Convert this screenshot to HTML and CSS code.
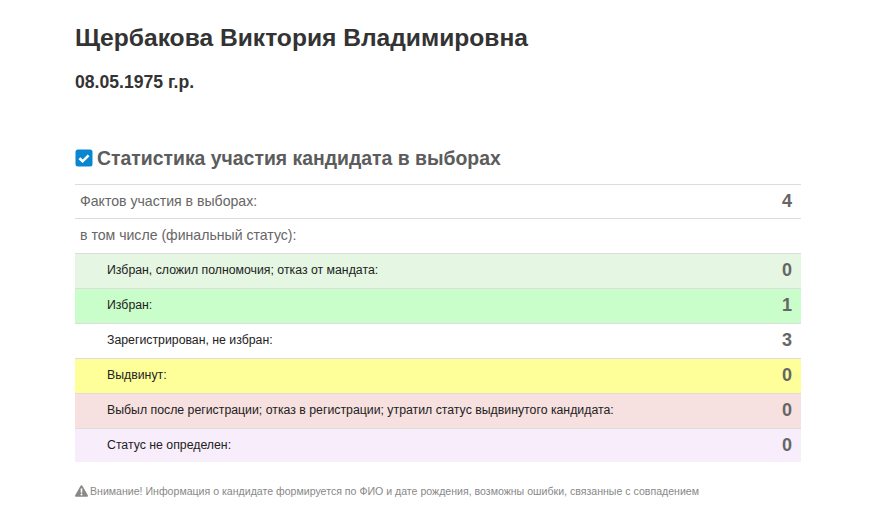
FILE: index.html
```html
<!DOCTYPE html>
<html lang="ru">
<head>
<meta charset="utf-8">
<title>Статистика</title>
<link rel="stylesheet" href="styles.css">
</head>
<body>
<main class="page">
  <h1 class="name">Щербакова Виктория Владимировна</h1>
  <h2 class="dob">08.05.1975 г.р.</h2>
  <h3 class="section">
    <svg class="check" width="18" height="18" viewBox="0 0 18 18"><rect x="0.5" y="0.5" width="17" height="17" rx="2.5" fill="#0a85d0"/><path d="M4.4 9.2l3.2 3.1 6-6" fill="none" stroke="#fff" stroke-width="2.6"/></svg>
    Статистика участия кандидата в выборах
  </h3>
  <div class="stats">
    <div class="row main first"><span>Фактов участия в выборах:</span><b class="num">4</b></div>
    <div class="row main"><span>в том числе (финальный статус):</span></div>
    <div class="row sub green"><span>Избран, сложил полномочия; отказ от мандата:</span><b class="num">0</b></div>
    <div class="row sub bright"><span>Избран:</span><b class="num">1</b></div>
    <div class="row sub"><span>Зарегистрирован, не избран:</span><b class="num">3</b></div>
    <div class="row sub yellow"><span>Выдвинут:</span><b class="num">0</b></div>
    <div class="row sub red"><span>Выбыл после регистрации; отказ в регистрации; утратил статус выдвинутого кандидата:</span><b class="num">0</b></div>
    <div class="row sub violet"><span>Статус не определен:</span><b class="num">0</b></div>
  </div>
  <p class="note">
    <svg class="warn" width="13" height="12" viewBox="0 0 13 12"><path fill-rule="evenodd" d="M6.5.3c.4 0 .7.2.9.5l5.4 9.5c.4.7-.1 1.5-.9 1.5H1.1c-.8 0-1.3-.8-.9-1.5L5.6.8c.2-.3.5-.5.9-.5zM5.6 3.6l.2 4.2h1.4l.2-4.2zM6.5 8.5a1 1 0 1 0 0 2 1 1 0 0 0 0-2z" fill="#888"/></svg>
    Внимание! Информация о кандидате формируется по ФИО и дате рождения, возможны ошибки, связанные с совпадением
  </p>
</main>
</body>
</html>
```
FILE: styles.css
```css
html, body {
  margin: 0;
  padding: 0;
  background: #fff;
}
body {
  font-family: "Liberation Sans", Arial, sans-serif;
  color: #333;
}
.page {
  width: 726px;
  margin-left: 75px;
  padding-top: 23px;
  padding-bottom: 28px;
}
.name {
  margin: 0;
  font-size: 24.6px;
  line-height: 30px;
  font-weight: 700;
  color: #333;
}
.dob {
  margin: 19px 0 0;
  font-size: 17.6px;
  line-height: 21px;
  font-weight: 700;
  color: #333;
}
.section {
  margin: 53px 0 0;
  display: flex;
  align-items: center;
  gap: 5px;
  font-size: 19.4px;
  line-height: 24px;
  font-weight: 700;
  color: #5c5c5c;
}
.check {
  flex: none;
  margin-left: -0.5px;
  margin-right: -0.5px;
}
.stats {
  margin-top: 14px;
  border-top: 1px solid #ddd;
}
.row {
  display: flex;
  justify-content: space-between;
  align-items: center;
  height: 32px;
  padding: 0 9px 2px 5px;
  border-bottom: 1px solid #ddd;
}
.first {
  height: 31px;
}
.main {
  font-size: 14.1px;
  color: #666;
}
.sub {
  padding-left: 32px;
  font-size: 12.3px;
  color: #222;
}
.sub:last-child {
  border-bottom: 0;
  height: 31px;
}
.num {
  font-size: 18px;
  line-height: 20px;
  color: #666;
}
.green { background: #e5f6e2; }
.bright { background: #c9fdc9; }
.yellow { background: #ffff99; }
.red { background: #f6e0e0; }
.violet { background: #f8edfa; }
.note {
  margin: 22px 0 0;
  display: flex;
  align-items: center;
  gap: 2px;
  font-size: 10.58px;
  line-height: 14px;
  color: #888;
}
.warn {
  flex: none;
}
```
